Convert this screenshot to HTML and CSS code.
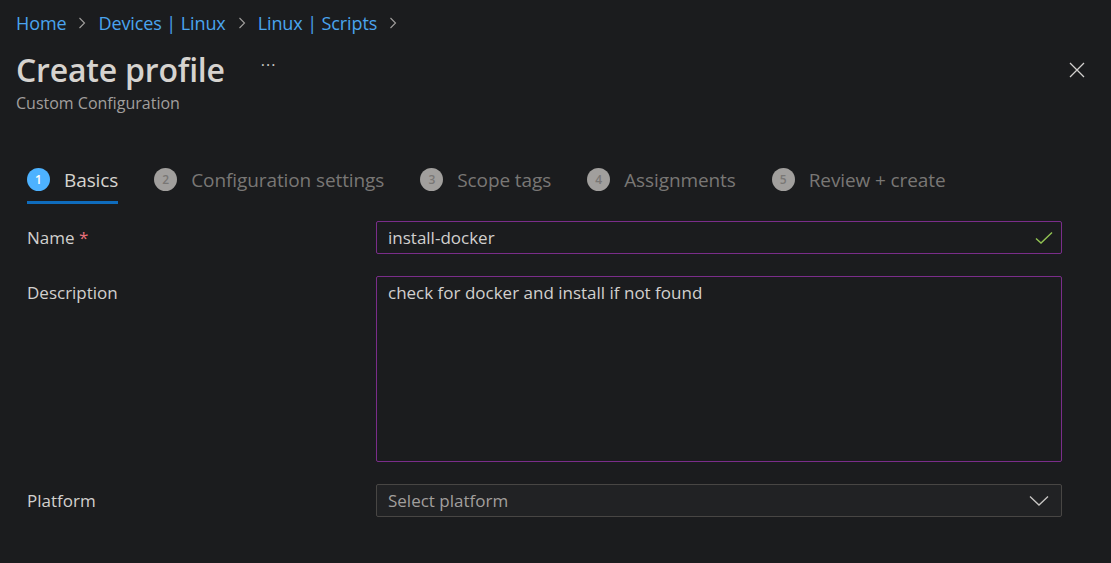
FILE: index.html
```html
<!DOCTYPE html>
<html lang="en">
<head>
<meta charset="utf-8">
<title>Create profile</title>
<link rel="stylesheet" href="styles.css">
</head>
<body>
<div class="page">
  <nav class="breadcrumb">
    <a class="crumb" href="#">Home</a>
    <svg class="chev" viewBox="0 0 10 16" width="10" height="16"><path d="M2.5 3 L7.5 8 L2.5 13" fill="none" stroke="#a19f9d" stroke-width="1.1"/></svg>
    <a class="crumb" href="#">Devices | Linux</a>
    <svg class="chev" viewBox="0 0 10 16" width="10" height="16"><path d="M2.5 3 L7.5 8 L2.5 13" fill="none" stroke="#a19f9d" stroke-width="1.1"/></svg>
    <a class="crumb" href="#">Linux | Scripts</a>
    <svg class="chev" viewBox="0 0 10 16" width="10" height="16"><path d="M2.5 3 L7.5 8 L2.5 13" fill="none" stroke="#a19f9d" stroke-width="1.1"/></svg>
  </nav>

  <header class="header">
    <div class="title-block">
      <div class="title-row">
        <h1 class="title">Create profile</h1>
        <span class="more">&middot;&middot;&middot;</span>
      </div>
      <div class="subtitle">Custom Configuration</div>
    </div>
    <button class="close" aria-label="Close">
      <svg viewBox="0 0 16 16" width="16" height="16"><path d="M1 1 L15 15 M15 1 L1 15" stroke="#d2d0ce" stroke-width="1.3" fill="none"/></svg>
    </button>
  </header>

  <div class="tabs">
    <div class="tab active"><span class="num">1</span><span class="tab-label">Basics</span></div>
    <div class="tab"><span class="num">2</span><span class="tab-label">Configuration settings</span></div>
    <div class="tab"><span class="num">3</span><span class="tab-label">Scope tags</span></div>
    <div class="tab"><span class="num">4</span><span class="tab-label">Assignments</span></div>
    <div class="tab"><span class="num">5</span><span class="tab-label">Review + create</span></div>
  </div>

  <form class="form">
    <label class="label">Name <span class="req">*</span></label>
    <div class="field input valid">
      <span class="value">install-docker</span>
      <svg class="check" viewBox="0 0 18 14" width="18" height="14"><path d="M1 7.5 L6 12 L17 1.5" fill="none" stroke="#92c353" stroke-width="1.4"/></svg>
    </div>

    <label class="label">Description</label>
    <div class="field textarea">check for docker and install if not found</div>

    <label class="label">Platform</label>
    <div class="field select">
      <span class="placeholder">Select platform</span>
      <svg class="dropdown" viewBox="0 0 20 12" width="20" height="12"><path d="M1 1.5 L10 10 L19 1.5" fill="none" stroke="#c8c6c4" stroke-width="1.3"/></svg>
    </div>
  </form>
</div>
</body>
</html>
```
FILE: styles.css
```css
* { box-sizing: border-box; }

html, body {
  margin: 0;
  padding: 0;
  background: #1b1c1e;
  font-family: "Open Sans", "Noto Sans", "Liberation Sans", sans-serif;
  color: #d2d0ce;
}

.page {
  padding: 0 16px;
}

.breadcrumb {
  display: flex;
  align-items: center;
  height: 46px;
  gap: 11px;
}

.crumb {
  color: #4aa4ee;
  text-decoration: none;
  font-size: 18px;
  letter-spacing: -0.1px;
}

.chev { display: block; }

.header {
  display: flex;
  justify-content: space-between;
  align-items: flex-start;
}

.title-row {
  display: flex;
  align-items: center;
  gap: 36px;
  height: 46px;
}

.title {
  margin: 0;
  font-size: 32px;
  font-weight: 600;
  color: #d6d3cf;
  letter-spacing: -0.2px;
}

.more {
  color: #c8c6c4;
  font-size: 16px;
  letter-spacing: 1px;
  margin-top: -8px;
}

.subtitle {
  font-size: 16px;
  color: #a19f9d;
  margin-top: 0;
}

.close {
  background: none;
  border: 0;
  padding: 0;
  margin: 16px 10px 0 0;
  cursor: pointer;
  display: block;
}
.close svg { display: block; }

.tabs {
  display: flex;
  align-items: stretch;
  margin: 42px 0 0 11px;
  gap: 36px;
  height: 48px;
}

.tab {
  display: flex;
  align-items: center;
  gap: 14px;
  font-size: 19px;
  color: #797775;
  border-bottom: 3px solid transparent;
  padding-top: 2px;
  letter-spacing: -0.1px;
}

.tab.active {
  color: #d6d3cf;
  border-bottom-color: #0f6cbd;
}

.num {
  width: 23px;
  height: 23px;
  border-radius: 50%;
  background: #a19f9d;
  color: #797775;
  font-size: 12px;
  font-weight: 600;
  display: flex;
  align-items: center;
  justify-content: center;
}

.tab.active .num {
  background: #4db2ff;
  color: #ffffff;
}

.form {
  display: grid;
  grid-template-columns: 349px 686px;
  row-gap: 22px;
  margin: 17px 0 0 11px;
  align-items: start;
}

.label {
  font-size: 17px;
  color: #d2d0ce;
  line-height: 33px;
}

.req { color: #e8707a; }

.field {
  border: 1px solid #7a2d8a;
  border-radius: 2px;
  background: #1b1c1e;
  font-size: 17px;
  color: #d2d0ce;
  padding: 0 11px;
}

.input {
  height: 33px;
  display: flex;
  align-items: center;
  justify-content: space-between;
  padding-right: 8px;
}

.textarea {
  height: 186px;
  padding-top: 4px;
  line-height: 24px;
}

.select {
  height: 33px;
  display: flex;
  align-items: center;
  justify-content: space-between;
  border-color: #484644;
  background: #212224;
  padding-right: 12px;
}

.placeholder { color: #a19f9d; }

.check, .dropdown { display: block; }
```
